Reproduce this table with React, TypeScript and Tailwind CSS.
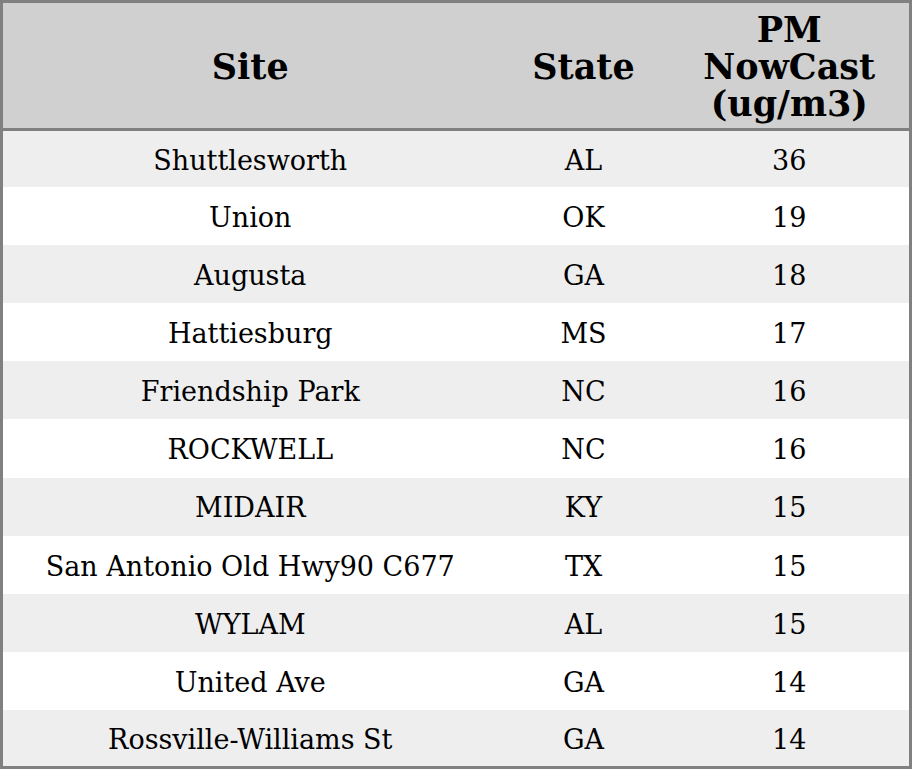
const rows: [string, string, number][] = [
  ["Shuttlesworth", "AL", 36],
  ["Union", "OK", 19],
  ["Augusta", "GA", 18],
  ["Hattiesburg", "MS", 17],
  ["Friendship Park", "NC", 16],
  ["ROCKWELL", "NC", 16],
  ["MIDAIR", "KY", 15],
  ["San Antonio Old Hwy90 C677", "TX", 15],
  ["WYLAM", "AL", 15],
  ["United Ave", "GA", 14],
  ["Rossville-Williams St", "GA", 14],
];

export default function App() {
  return (
    <div className="w-[912px] h-[769px] bg-white font-['DejaVu_Serif',serif] text-black">
      <table className="w-full h-full border-[3px] border-[#808080] border-collapse table-fixed">
        <colgroup>
          <col className="w-[496px]" />
          <col className="w-[172px]" />
          <col />
        </colgroup>
        <thead>
          <tr className="bg-[#d0d0d0] border-b-[3px] border-[#808080] h-[128px]">
            <th className="text-[35px] leading-[37px] font-bold text-center pt-[2px]">Site</th>
            <th className="text-[35px] leading-[37px] font-bold text-center pt-[2px]">State</th>
            <th className="text-[35px] leading-[37px] font-bold text-center pt-[2px]">
              PM
              <br />
              NowCast
              <br />
              (ug/m3)
            </th>
          </tr>
        </thead>
        <tbody>
          {rows.map(([site, st, v], i) => (
            <tr
              key={site}
              className={`${i % 2 === 0 ? "bg-[#eeeeee]" : "bg-white"} ${
                i === 0 ? "h-[57px]" : i === rows.length - 1 ? "h-[57px]" : "h-[58px]"
              }`}
            >
              <td className="text-[27px] text-center pt-[4px]">{site}</td>
              <td className="text-[27px] text-center pt-[4px]">{st}</td>
              <td className="text-[27px] text-center pt-[4px]">{v}</td>
            </tr>
          ))}
        </tbody>
      </table>
    </div>
  );
}
